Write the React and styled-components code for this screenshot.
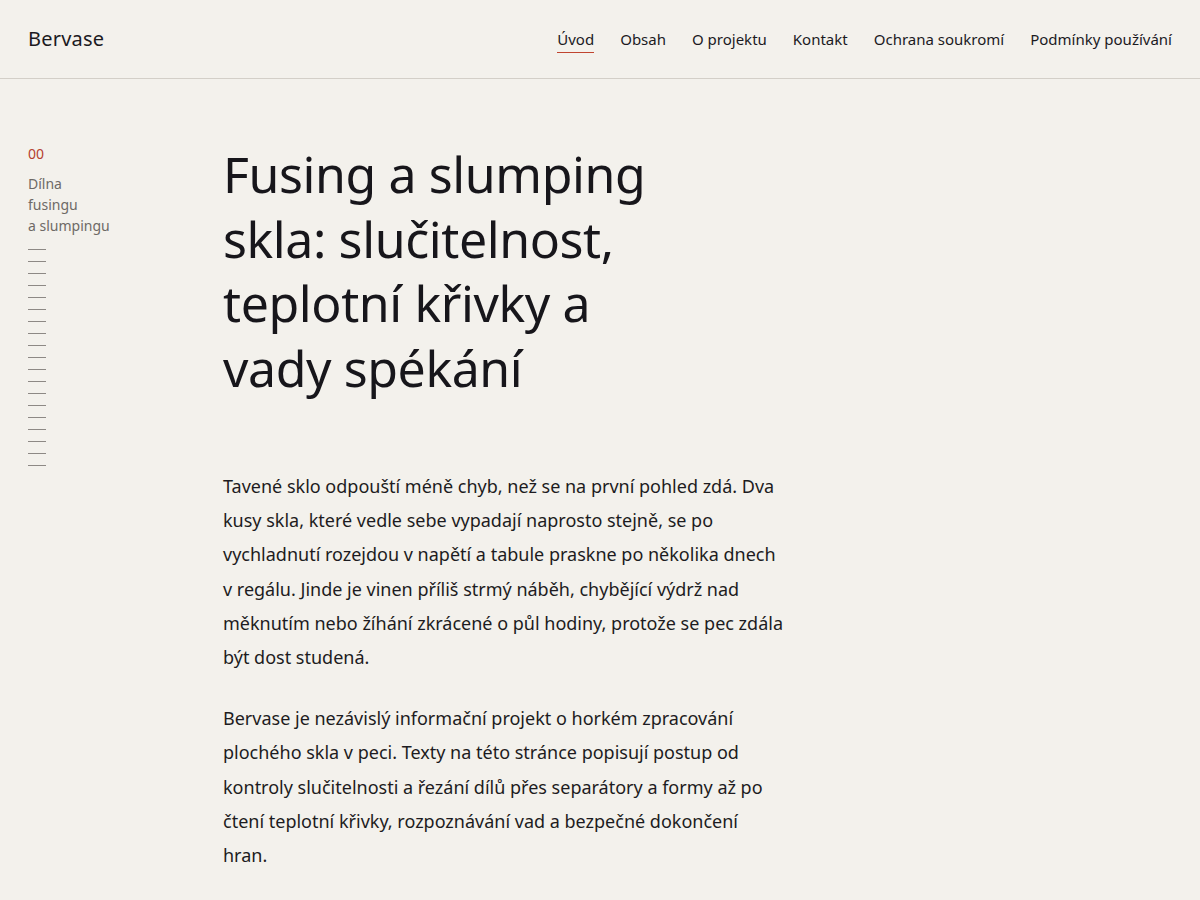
import React from "react";
import styled, { createGlobalStyle } from "styled-components";

const Global = createGlobalStyle`
  html, body { margin: 0; padding: 0; background: #f3f1ec; }
  body { font-family: "Noto Sans", "Open Sans", sans-serif; color: #1b1a1f; }
  * { box-sizing: border-box; }
`;

const Header = styled.header`
  height: 79px;
  border-bottom: 1px solid #d3cfc8;
  display: flex;
  align-items: center;
  justify-content: space-between;
  padding: 0 28px;
`;

const Logo = styled.a`
  font-size: 20px;
  color: #1b1a1f;
  text-decoration: none;
  letter-spacing: 0.2px;
  margin-top: -2px;
`;

const Nav = styled.nav`
  display: flex;
  gap: 26px;
  padding-top: 4px;
`;

const NavLink = styled.a`
  font-size: 15px;
  color: #1b1a1f;
  text-decoration: none;
  padding-bottom: 3px;
  border-bottom: 1px solid ${(p) => (p.$active ? "#c0442f" : "transparent")};
`;

const Layout = styled.div`
  display: grid;
  grid-template-columns: 195px 1fr;
  padding: 64px 28px 0;
`;

const Aside = styled.aside`
  display: flex;
  flex-direction: column;
`;

const Num = styled.div`
  font-size: 14px;
  color: #b5402e;
  line-height: 21px;
`;

const AsideTitle = styled.div`
  margin-top: 9px;
  font-size: 14px;
  line-height: 21px;
  color: #6e6a66;
`;

const Ticks = styled.div`
  margin-top: 13px;
  display: flex;
  flex-direction: column;
  gap: 11px;
`;

const Tick = styled.span`
  display: block;
  width: 18px;
  height: 1px;
  background: #8d8985;
`;

const Main = styled.main``;

const Title = styled.h1`
  margin: -1px 0 0;
  font-weight: 400;
  font-size: 50px;
  line-height: 64.5px;
  max-width: 460px;
  letter-spacing: -0.4px;
  color: #17161b;
`;

const Body = styled.div`
  margin-top: 69px;
  max-width: 562px;
`;

const P = styled.p`
  margin: 0 0 27px;
  font-size: 18px;
  line-height: 34.2px;
  color: #1d1c21;
`;

const links = ["Úvod", "Obsah", "O projektu", "Kontakt", "Ochrana soukromí", "Podmínky používání"];

export default function App() {
  return (
    <>
      <Global />
      <Header>
        <Logo href="#">Bervase</Logo>
        <Nav>
          {links.map((l, i) => (
            <NavLink key={l} href="#" $active={i === 0}>{l}</NavLink>
          ))}
        </Nav>
      </Header>
      <Layout>
        <Aside>
          <Num>00</Num>
          <AsideTitle>Dílna<br />fusingu<br />a slumpingu</AsideTitle>
          <Ticks>
            {Array.from({ length: 19 }).map((_, i) => <Tick key={i} />)}
          </Ticks>
        </Aside>
        <Main>
          <Title>Fusing a slumping skla: slučitelnost, teplotní křivky a vady spékání</Title>
          <Body>
            <P>Tavené sklo odpouští méně chyb, než se na první pohled zdá. Dva kusy skla, které vedle sebe vypadají naprosto stejně, se po vychladnutí rozejdou v napětí a tabule praskne po několika dnech v regálu. Jinde je vinen příliš strmý náběh, chybějící výdrž nad měknutím nebo žíhání zkrácené o půl hodiny, protože se pec zdála být dost studená.</P>
            <P>Bervase je nezávislý informační projekt o horkém zpracování plochého skla v peci. Texty na této stránce popisují postup od kontroly slučitelnosti a řezání dílů přes separátory a formy až po čtení teplotní křivky, rozpoznávání vad a bezpečné dokončení hran.</P>
          </Body>
        </Main>
      </Layout>
    </>
  );
}
